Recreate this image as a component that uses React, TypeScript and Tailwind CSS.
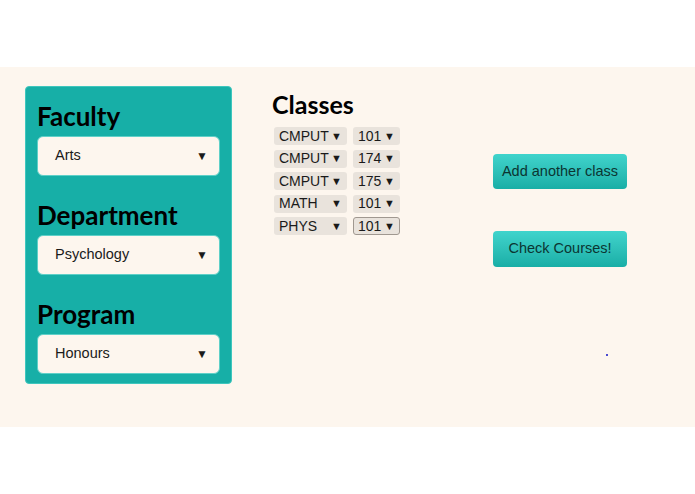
const departmentFields = [
  { label: "Faculty", value: "Arts" },
  { label: "Department", value: "Psychology" },
  { label: "Program", value: "Honours" },
];

const classes = [
  { subject: "CMPUT", number: "101" },
  { subject: "CMPUT", number: "174" },
  { subject: "CMPUT", number: "175" },
  { subject: "MATH", number: "101" },
  { subject: "PHYS", number: "101", focused: true },
];

const sans = { fontFamily: '"Liberation Sans", Arial, sans-serif' };
const heading = { fontFamily: 'Lato, "Noto Sans", sans-serif' };

const App = () => {
  return (
    <div className="w-[695px] h-[494px] bg-white">
      <div className="h-[67px]" />
      <div className="relative h-[360px] bg-[#fdf6ee] flex pl-[25px] pt-[19px]">
        {/* Left panel */}
        <div className="w-[207px] h-[298px] bg-[#17afa7] border border-[#3ec6bd] rounded-[4px] px-[11px] pt-[12px]">
          {departmentFields.map((f) => (
            <div key={f.label} className="h-[99px]">
              <h2 className="text-[26px] font-bold leading-[34px] text-black" style={heading}>
                {f.label}
              </h2>
              <div
                className="mt-[3px] h-[40px] bg-[#fdf6ee] border border-[#5fd0c8] rounded-[6px] flex items-center justify-between pl-[17px] pr-[11px] text-[14.5px] text-[#1a1a1a]"
                style={sans}
              >
                <span>{f.value}</span>
                <span className="text-[12px]">▼</span>
              </div>
            </div>
          ))}
        </div>

        {/* Classes */}
        <div className="ml-[40px] pt-[2px]">
          <h2 className="text-[25px] font-bold leading-[32px] text-black" style={heading}>
            Classes
          </h2>
          <div className="mt-[7px] ml-[2px] flex flex-col gap-[4.5px]">
            {classes.map((c, i) => (
              <div key={i} className="flex gap-[6px] text-[14px] text-[#1a1a1a]" style={sans}>
                <div className="w-[73px] h-[18px] bg-[#e9e3dc] rounded-[3px] flex items-center justify-between pl-[5px] pr-[5px]">
                  <span>{c.subject}</span>
                  <span className="text-[11px]">▼</span>
                </div>
                <div
                  className={
                    c.focused
                      ? "w-[47px] h-[18px] bg-[#e9e3dc] rounded-[3px] border border-[#a09890] flex items-center justify-between pl-[4px] pr-[4px]"
                      : "w-[47px] h-[18px] bg-[#e9e3dc] rounded-[3px] flex items-center justify-between pl-[5px] pr-[5px]"
                  }
                >
                  <span>{c.number}</span>
                  <span className="text-[11px]">▼</span>
                </div>
              </div>
            ))}
          </div>
        </div>

        {/* Buttons */}
        <div className="ml-[93px] pt-[68px] flex flex-col gap-[42px]">
          <button
            className="w-[134px] h-[35px] rounded-[4px] bg-gradient-to-b from-[#40d4cc] to-[#18aea6] text-[14.5px] text-[#0b3532]"
            style={sans}
          >
            Add another class
          </button>
          <button
            className="w-[134px] h-[36px] rounded-[4px] bg-gradient-to-b from-[#40d4cc] to-[#18aea6] text-[14.5px] text-[#0b3532]"
            style={sans}
          >
            Check Courses!
          </button>
        </div>

        <div className="absolute left-[606px] top-[287px] w-[2px] h-[2px] bg-[#4a4ad0]" />
      </div>
    </div>
  );
};

export default App;
